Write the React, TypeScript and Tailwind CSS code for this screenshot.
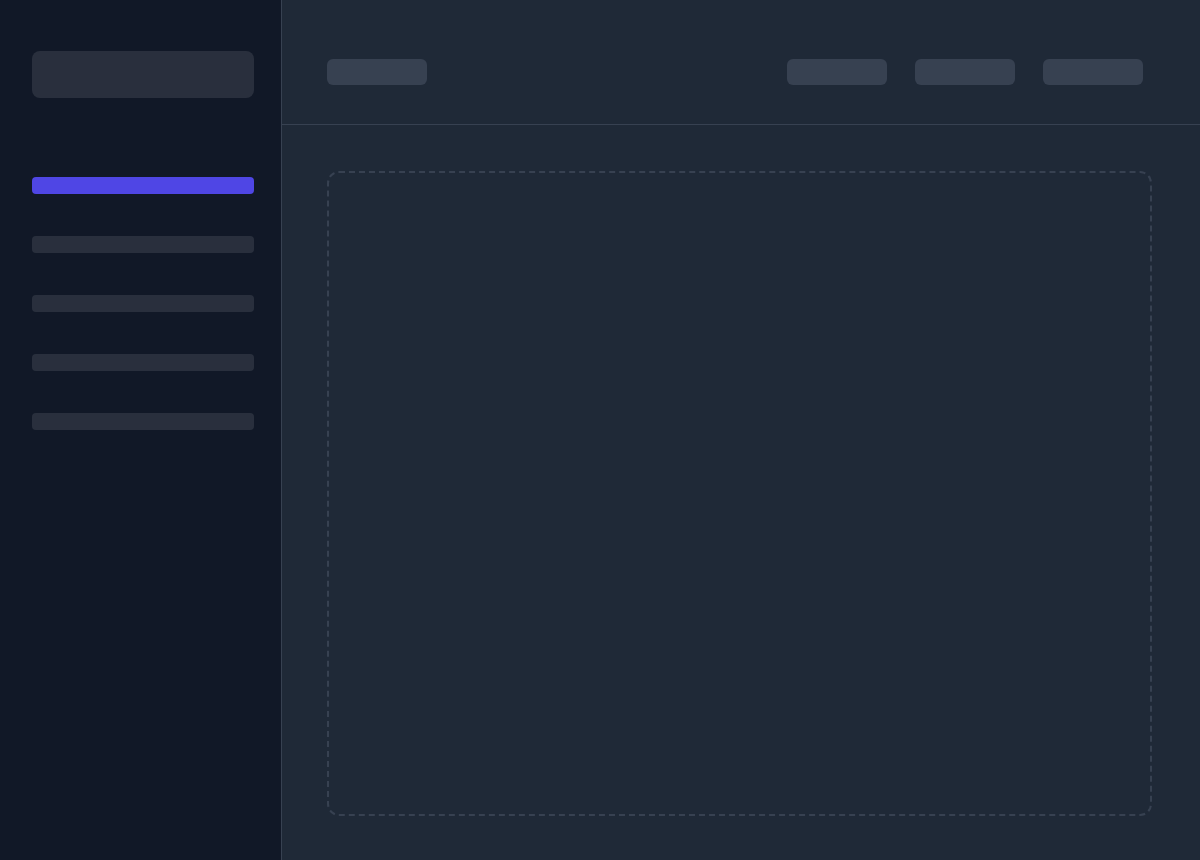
import React from 'react';

const navItems = [true, false, false, false, false];

const App: React.FC = () => {
  return (
    <div className="flex w-[1200px] h-[860px] bg-[#1f2937] overflow-hidden font-['Liberation_Sans',sans-serif]">
      {/* Sidebar */}
      <aside className="w-[282px] shrink-0 bg-[#111827] border-r border-[#374151] pl-8 pr-[27px] pt-[51px] flex flex-col">
        <div className="h-[47px] rounded-lg bg-white/10" />
        <nav className="mt-[79px] flex flex-col gap-[42px]">
          {navItems.map((active, i) => (
            <div
              key={i}
              className={`h-[17px] rounded ${active ? 'bg-[#4f46e5]' : 'bg-white/10'}`}
            />
          ))}
        </nav>
      </aside>

      {/* Main */}
      <main className="flex-1 flex flex-col min-w-0">
        <header className="h-[125px] shrink-0 border-b border-[#374151] pl-[45px] pr-[57px] pt-[59px] flex items-start justify-between">
          <div className="w-[100px] h-[26px] rounded-md bg-[#374151]" />
          <div className="flex gap-7">
            <div className="w-[100px] h-[26px] rounded-md bg-[#374151]" />
            <div className="w-[100px] h-[26px] rounded-md bg-[#374151]" />
            <div className="w-[100px] h-[26px] rounded-md bg-[#374151]" />
          </div>
        </header>
        <section className="flex-1 flex pl-[45px] pr-[48px] pt-[46px] pb-[44px]">
          <div className="flex-1 rounded-xl border-2 border-dashed border-[#374151]" />
        </section>
      </main>
    </div>
  );
};

export default App;
